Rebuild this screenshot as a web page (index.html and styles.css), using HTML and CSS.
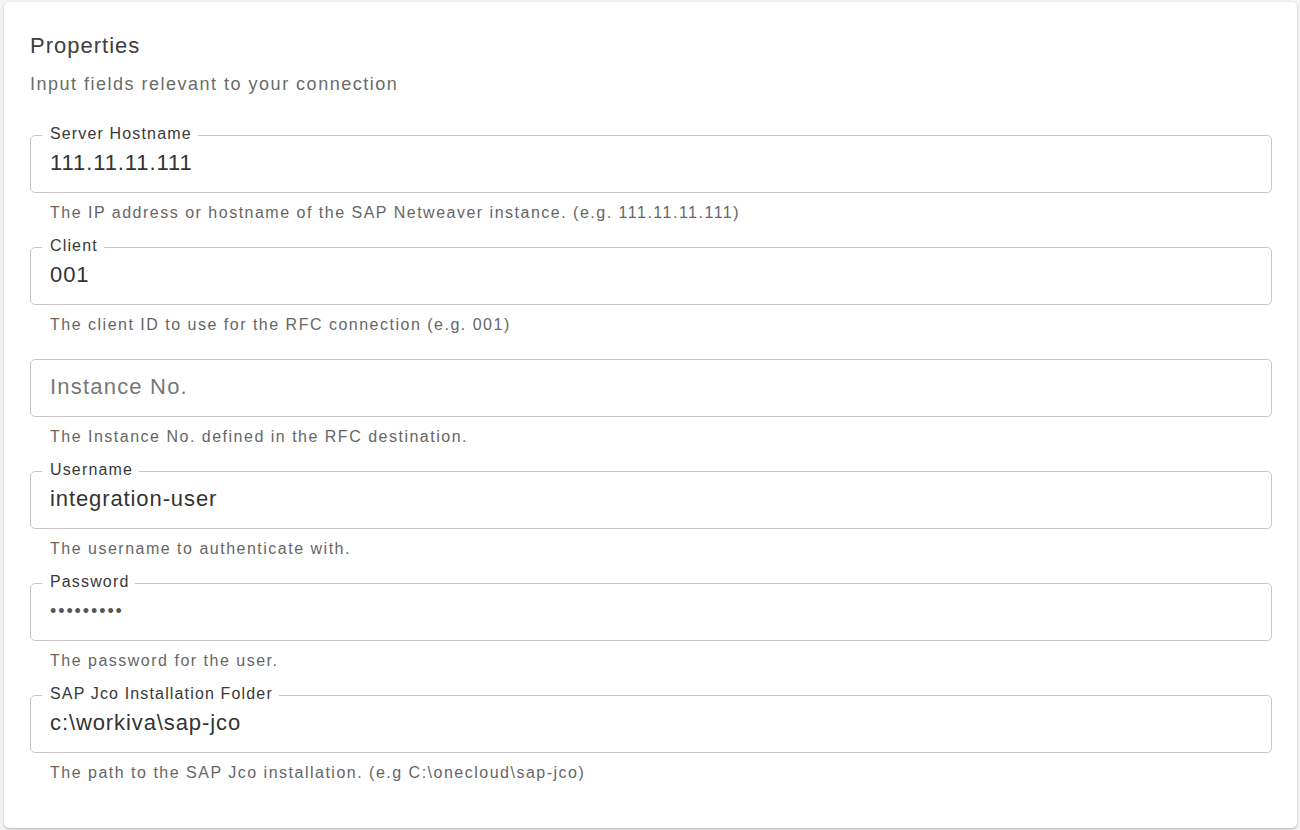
FILE: index.html
```html
<!DOCTYPE html>
<html lang="en">
<head>
<meta charset="utf-8">
<title>Properties</title>
<link rel="stylesheet" href="styles.css">
</head>
<body>
  <div class="page">
    <section class="card">
      <h2 class="title">Properties</h2>
      <p class="subtitle">Input fields relevant to your connection</p>

      <div class="fields">
        <div class="field">
          <fieldset class="box">
            <legend class="label">Server Hostname</legend>
            <div class="value">111.11.11.111</div>
          </fieldset>
          <p class="helper">The IP address or hostname of the SAP Netweaver instance. (e.g. 111.11.11.111)</p>
        </div>

        <div class="field">
          <fieldset class="box">
            <legend class="label">Client</legend>
            <div class="value">001</div>
          </fieldset>
          <p class="helper">The client ID to use for the RFC connection (e.g. 001)</p>
        </div>

        <div class="field">
          <fieldset class="box">
            <legend class="label label-empty"></legend>
            <div class="value placeholder">Instance No.</div>
          </fieldset>
          <p class="helper">The Instance No. defined in the RFC destination.</p>
        </div>

        <div class="field">
          <fieldset class="box">
            <legend class="label">Username</legend>
            <div class="value">integration-user</div>
          </fieldset>
          <p class="helper">The username to authenticate with.</p>
        </div>

        <div class="field">
          <fieldset class="box">
            <legend class="label">Password</legend>
            <div class="value secret">•••••••••</div>
          </fieldset>
          <p class="helper">The password for the user.</p>
        </div>

        <div class="field">
          <fieldset class="box">
            <legend class="label">SAP Jco Installation Folder</legend>
            <div class="value">c:\workiva\sap-jco</div>
          </fieldset>
          <p class="helper">The path to the SAP Jco installation. (e.g C:\onecloud\sap-jco)</p>
        </div>
      </div>
    </section>
  </div>
</body>
</html>
```

FILE: styles.css
```css
* {
  box-sizing: border-box;
}

html, body {
  margin: 0;
  padding: 0;
  background: #f3f3f3;
  font-family: "Liberation Sans", Arial, Helvetica, sans-serif;
}

.page {
  padding: 2px 3px 2px 4px;
  height: 830px;
}

.card {
  background: #ffffff;
  border-radius: 5px;
  height: 826px;
  padding: 31px 25px 0 26px;
  box-shadow: 0 1px 3px rgba(0, 0, 0, 0.18), 0 1px 1px rgba(0, 0, 0, 0.10);
}

.title {
  margin: 0;
  font-size: 22px;
  line-height: 26px;
  font-weight: 400;
  letter-spacing: 1px;
  color: #404040;
}

.subtitle {
  margin: 14px 0 0;
  font-size: 18px;
  line-height: 22px;
  letter-spacing: 1.5px;
  color: #6b6b6b;
}

.fields {
  margin-top: 30px;
  display: flex;
  flex-direction: column;
  gap: 14px;
}

.field {
  display: flex;
  flex-direction: column;
}

.box {
  margin: 0;
  padding: 0;
  min-width: 0;
  border: 1px solid #c6c6c6;
  border-radius: 5px;
}

.label {
  margin-left: 11px;
  padding: 0 6px 3px 8px;
  font-size: 16px;
  line-height: 18px;
  letter-spacing: 1.15px;
  color: #383838;
}

.label-empty {
  width: 0;
  height: 21px;
  padding: 0;
  margin-left: 11px;
}

.value {
  padding: 4px 19px 16px;
  font-size: 22px;
  line-height: 26px;
  height: 46px;
  letter-spacing: 0.9px;
  color: #333333;
  white-space: nowrap;
}

.placeholder {
  letter-spacing: 1.2px;
  color: #777777;
}

.secret {
  font-size: 18px;
  letter-spacing: 1.9px;
  color: #555555;
}

.helper {
  margin: 10px 0 0 20px;
  font-size: 16px;
  line-height: 20px;
  letter-spacing: 1.5px;
  color: #666666;
}
```
